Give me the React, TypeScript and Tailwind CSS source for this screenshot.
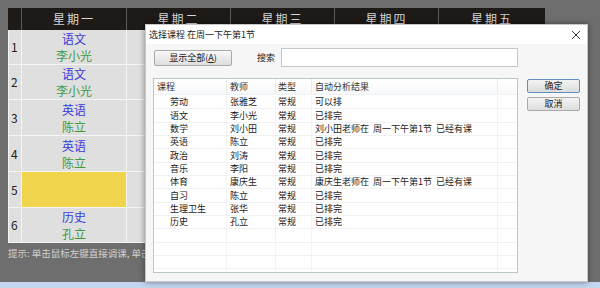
import React from "react";

const cjk = { fontFamily: '"Noto Sans CJK SC", "Noto Sans", sans-serif' };

const rows = [
  { h: "h-[35px]", c: "语文", t: "李小光" },
  { h: "h-[35px]", c: "语文", t: "李小光" },
  { h: "h-[36px]", c: "英语", t: "陈立" },
  { h: "h-[36px]", c: "英语", t: "陈立" },
  { h: "h-[36px]", c: "", t: "", y: true },
  { h: "h-[34px]", c: "历史", t: "孔立" },
];

const list = [
  ["劳动", "张雅芝", "常规", "可以排"],
  ["语文", "李小光", "常规", "已排完"],
  ["数学", "刘小田", "常规", "刘小田老师在  周一下午第1节  已经有课"],
  ["英语", "陈立", "常规", "已排完"],
  ["政治", "刘涛", "常规", "已排完"],
  ["音乐", "李阳", "常规", "已排完"],
  ["体育", "康庆生", "常规", "康庆生老师在  周一下午第1节  已经有课"],
  ["自习", "陈立", "常规", "已排完"],
  ["生理卫生", "张华", "常规", "已排完"],
  ["历史", "孔立", "常规", "已排完"],
  ["", "", "", ""],
  ["", "", "", ""],
  ["", "", "", ""],
  ["", "", "", ""],
];

export default function App() {
  return (
    <div className="relative w-[600px] h-[288px] overflow-hidden bg-[#6e6e6e]" style={cjk}>
      <div className="flex flex-col h-full">
        <div className="flex-1 pt-[8px] pl-[8px]">
          {/* header */}
          <div className="flex h-[22px] w-[537px] bg-[#1d1a18] text-[#d6d6d6] text-[12px] leading-[22px]">
            <div className="w-[14px] border-r border-[#5a5a5a]"></div>
            <div className="w-[105px] border-r border-[#5a5a5a] text-center tracking-[2px]">星期一</div>
            <div className="w-[104px] border-r border-[#5a5a5a] text-center tracking-[2px]">星期二</div>
            <div className="w-[104px] border-r border-[#5a5a5a] text-center tracking-[2px]">星期三</div>
            <div className="w-[104px] border-r border-[#5a5a5a] text-center tracking-[2px]">星期四</div>
            <div className="w-[106px] text-center tracking-[2px]">星期五</div>
          </div>
          <div className="w-[537px] border-l border-b border-[#f4f4f4]">
            {rows.map((r, i) => (
              <div key={i} className={`flex ${r.h} border-b border-[#f4f4f4] last:border-b-0 bg-[#dfdfdf]`}>
                <div className="w-[13px] border-r border-[#f4f4f4] flex items-center pl-[2px] text-[12px] text-[#222]">{i + 1}</div>
                <div className={`w-[105px] border-r border-[#f4f4f4] flex flex-col items-center justify-center text-[12px] leading-[17px] ${r.y ? "bg-[#f0d54c]" : ""}`}>
                  <span className="text-[#3b3bdc]">{r.c}</span>
                  <span className="text-[#3f9a3f]">{r.t}</span>
                </div>
                <div className="flex-1"></div>
              </div>
            ))}
          </div>
          <div className="mt-[4px] text-[9.5px] text-[#d0d0d0] leading-[12px] whitespace-nowrap">提示: 单击鼠标左键直接调课, 单击鼠标右键选择课程</div>
        </div>
        <div className="h-[6px] bg-[#c3d6ef]"></div>
      </div>

      {/* dialog */}
      <div className="absolute left-[145px] top-[24px] w-[443px] h-[258px] bg-[#f6f6f6] border border-[#c8c8c8] shadow-[0_0_6px_rgba(0,0,0,0.45)] flex flex-col text-[9px] text-[#1a1a1a]">
        <div className="h-[19px] bg-white flex items-center justify-between pl-[3px] pr-[6px]">
          <span>选择课程 在周一下午第1节</span>
          <svg width="10" height="10" viewBox="0 0 10 10" className="mt-[1px]">
            <path d="M1 1 L9 9 M9 1 L1 9" stroke="#333" strokeWidth="1" />
          </svg>
        </div>
        <div className="flex-1 flex pl-[7px] pt-[4px] gap-[9px]">
          <div className="flex flex-col w-[365px]">
            <div className="flex items-center h-[19px]">
              <div className="shrink-0 ml-[1px] w-[78px] h-[16px] border border-[#a9a9a9] rounded-[2px] bg-gradient-to-b from-[#f8f8f8] to-[#dedede] flex items-center justify-center whitespace-nowrap">
                显示全部(<span className="underline">A</span>)
              </div>
              <span className="shrink-0 ml-[25px] whitespace-nowrap">搜索</span>
              <div className="flex-1 ml-[6px] h-[19px] border border-[#c0c8cc] bg-white"></div>
            </div>
            <div className="mt-[11px] h-[195px] border border-[#b9c6ca] bg-white overflow-hidden">
              <div className="flex h-[16px] items-center text-[#333] border-b border-[#eef0f2] bg-gradient-to-b from-white to-[#f7f8f9]">
                <div className="w-[73px] pl-[3px] border-r border-[#eaeaea] h-full flex items-center">课程</div>
                <div className="w-[49px] pl-[3px] border-r border-[#eaeaea] h-full flex items-center">教师</div>
                <div className="w-[36px] pl-[2px] border-r border-[#eaeaea] h-full flex items-center">类型</div>
                <div className="w-[186px] pl-[3px] border-r border-[#eaeaea] h-full flex items-center">自动分析结果</div>
                <div className="flex-1"></div>
              </div>
              <div className="h-[1px]"></div>
              {list.map((r, i) => (
                <div key={i} className="flex h-[13.33px] items-center border-b border-[#f1f1f1] whitespace-pre">
                  <div className="w-[73px] pl-[16px] border-r border-[#f3f3f3] h-full flex items-center">{r[0]}</div>
                  <div className="w-[49px] pl-[3px] border-r border-[#f3f3f3] h-full flex items-center">{r[1]}</div>
                  <div className="w-[36px] pl-[2px] border-r border-[#f3f3f3] h-full flex items-center">{r[2]}</div>
                  <div className="w-[186px] pl-[3px] border-r border-[#f3f3f3] h-full flex items-center">{r[3]}</div>
                  <div className="flex-1"></div>
                </div>
              ))}
            </div>
          </div>
          <div className="flex flex-col gap-[4px] pt-[31px]">
            <div className="w-[53px] h-[14px] border-[1.5px] border-[#5f8fc0] rounded-[2px] bg-gradient-to-b from-[#f4f4f4] to-[#dcdcdc] flex items-center justify-center">确定</div>
            <div className="w-[53px] h-[14px] border border-[#a9a9a9] rounded-[2px] bg-gradient-to-b from-[#f4f4f4] to-[#dcdcdc] flex items-center justify-center">取消</div>
          </div>
        </div>
      </div>
    </div>
  );
}
